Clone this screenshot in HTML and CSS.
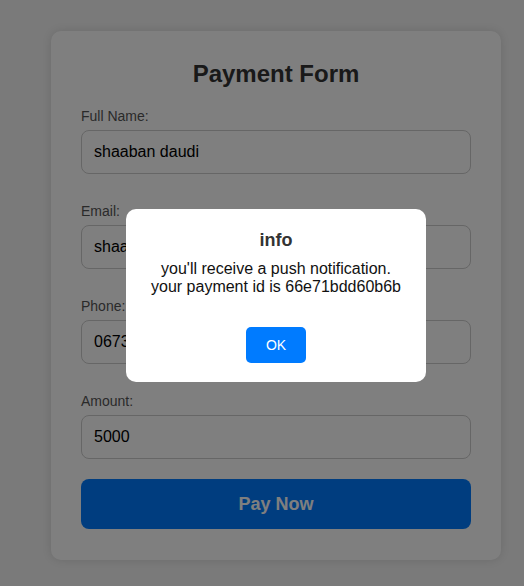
FILE: index.html
```html
<!DOCTYPE html>
<html lang="en">
<head>
<meta charset="utf-8">
<title>Payment Form</title>
<link rel="stylesheet" href="styles.css">
</head>
<body>
<div class="card">
  <h2 class="title">Payment Form</h2>
  <form class="form">
    <div class="field">
      <label class="label">Full Name:</label>
      <input class="input" type="text" value="shaaban daudi">
    </div>
    <div class="field">
      <label class="label">Email:</label>
      <input class="input" type="text" value="shaabandaudi@gmail.com">
    </div>
    <div class="field">
      <label class="label">Phone:</label>
      <input class="input" type="text" value="0673000000">
    </div>
    <div class="field">
      <label class="label">Amount:</label>
      <input class="input" type="text" value="5000">
    </div>
    <button type="button" class="pay">Pay Now</button>
  </form>
</div>
<div class="overlay">
  <div class="modal">
    <div class="modal-title">info</div>
    <div class="modal-text">you'll receive a push notification.<br>your payment id is 66e71bdd60b6b</div>
    <button type="button" class="ok">OK</button>
  </div>
</div>
</body>
</html>
```

FILE: styles.css
```css
html, body {
  margin: 0;
  padding: 0;
}
body {
  background: #f4f4f4;
  font-family: "Liberation Sans", Arial, sans-serif;
  padding: 31px 0 0 51px;
  min-height: 586px;
  box-sizing: border-box;
}
.card {
  width: 450px;
  box-sizing: border-box;
  background: #fff;
  border-radius: 10px;
  padding: 29px 30px 31px;
  box-shadow: 0 0 10px rgba(0, 0, 0, 0.12);
}
.title {
  margin: 0 0 20px;
  font-size: 24px;
  font-weight: bold;
  color: #333;
  text-align: center;
  line-height: 28px;
}
.form {
  display: flex;
  flex-direction: column;
}
.field + .field {
  margin-top: 29px;
}
.label {
  display: block;
  font-size: 14px;
  line-height: 16px;
  color: #555;
  margin-bottom: 6px;
}
.input {
  display: block;
  width: 100%;
  height: 44px;
  box-sizing: border-box;
  border: 1px solid #ccc;
  border-radius: 8px;
  padding: 0 12px;
  font-family: "Liberation Sans", Arial, sans-serif;
  font-size: 16px;
  color: #000;
  background: #fff;
}
.pay {
  margin-top: 20px;
  height: 50px;
  border: none;
  border-radius: 8px;
  background: #007bff;
  color: #fff;
  font-family: "Liberation Sans", Arial, sans-serif;
  font-size: 18px;
  font-weight: bold;
}
.overlay {
  position: fixed;
  inset: 0;
  background: rgba(0, 0, 0, 0.5);
  display: flex;
  align-items: center;
  justify-content: center;
  padding: 5px 0 0 28px;
  box-sizing: border-box;
}
.modal {
  width: 300px;
  box-sizing: border-box;
  background: #fff;
  border-radius: 10px;
  padding: 21px 20px 19px;
  text-align: center;
  display: flex;
  flex-direction: column;
  align-items: center;
}
.modal-title {
  font-size: 18px;
  font-weight: bold;
  color: #333;
  line-height: 21px;
  margin-bottom: 9px;
}
.modal-text {
  font-size: 16px;
  line-height: 18px;
  color: #111;
  margin-bottom: 31px;
}
.ok {
  border: none;
  border-radius: 5px;
  background: #007bff;
  color: #fff;
  font-family: "Liberation Sans", Arial, sans-serif;
  font-size: 14px;
  padding: 10px 20px;
  line-height: 16px;
}
```
